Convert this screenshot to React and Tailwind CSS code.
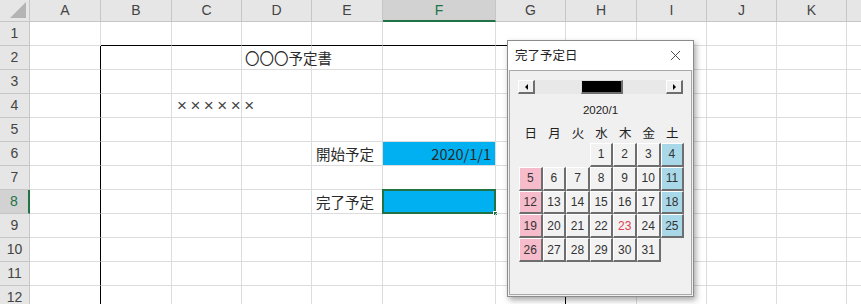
import React from 'react';
import { X } from 'lucide-react';

const COLS = ['A', 'B', 'C', 'D', 'E', 'F', 'G', 'H', 'I', 'J', 'K', ''];
const ROWS = [1, 2, 3, 4, 5, 6, 7, 8, 9, 10, 11, 12];

const jp = { fontFamily: '"Noto Sans CJK JP", "Noto Sans", sans-serif' };

// days of January 2020, starting on Wednesday
const DAYS = [null, null, null, ...Array.from({ length: 31 }, (_, i) => i + 1)];
const WEEK = ['日', '月', '火', '水', '木', '金', '土'];

function cellContent(r, c) {
  if (r === 2 && c === 3) return <span className="pl-[3px]">〇〇〇予定書</span>;
  if (r === 4 && c === 2)
    return (
      <span className="pl-[5px] text-[17px] tracking-[3.5px] text-[#444]" style={{ fontFamily: '"Liberation Sans", sans-serif' }}>
        ××××××
      </span>
    );
  if (r === 6 && c === 4) return <span className="pl-[4px]">開始予定</span>;
  if (r === 8 && c === 4) return <span className="pl-[4px]">完了予定</span>;
  return null;
}

function Cell({ r, c }) {
  const inBox = r >= 2;
  // outer box B2:G..
  const rightBlack = inBox && (c === 0 || c === 6);
  const bottomBlack = r === 1 && c >= 1 && c <= 6;
  const cls = [
    'relative flex items-center whitespace-nowrap overflow-visible text-[14.5px] text-[#2a2a2a]',
    'border-r border-b',
    rightBlack ? 'border-r-black' : 'border-r-[#dcdcdc]',
    bottomBlack ? 'border-b-black' : 'border-b-[#dcdcdc]',
  ];
  if (r === 6 && c === 5) {
    return (
      <div className={cls.join(' ') + ' bg-[#00b0f0] justify-end pr-[4px]'} style={jp}>
        2020/1/1
      </div>
    );
  }
  if (r === 8 && c === 5) {
    return (
      <div className={cls.join(' ') + ' bg-[#00b0f0]'}>
        <div className="absolute -left-px -top-px right-[-1px] bottom-[-1px] border-2 border-[#217346]" />
        <div className="absolute right-[-3px] bottom-[-3px] w-[5px] h-[5px] bg-[#217346] border border-white" />
      </div>
    );
  }
  return (
    <div className={cls.join(' ')} style={jp}>
      {cellContent(r, c)}
    </div>
  );
}

function DayButton({ d, col }) {
  if (!d) return <div />;
  const bg = col === 0 ? 'bg-[#f7bccb]' : col === 6 ? 'bg-[#a9d9e8]' : 'bg-[#f2f2f2]';
  const text = d === 23 ? 'text-[#e0404f]' : 'text-[#333]';
  return (
    <div
      className={`flex items-center justify-center text-[12px] border-t border-l border-t-white border-l-white border-r-2 border-b-2 border-r-[#6e6e6e] border-b-[#6e6e6e] ${bg} ${text}`}
      style={{ fontFamily: '"Liberation Sans", sans-serif' }}
    >
      {d}
    </div>
  );
}

function CalendarDialog() {
  return (
    <div className="absolute left-[507px] top-[40px] w-[187px] h-[257px] bg-[#f0f0f0] border border-[#8c8c8c] shadow-[2px_3px_6px_rgba(0,0,0,0.35)] flex flex-col">
      <div className="h-[29px] bg-white flex items-center justify-between pl-[7px] pr-[9px]">
        <span className="text-[12.5px] text-[#222]" style={jp}>完了予定日</span>
        <X size={17} strokeWidth={1.2} className="text-[#333]" />
      </div>
      <div className="flex-1 mx-[1px] mb-[1px] border border-[#a8a8a8] flex flex-col">
        {/* scroll bar */}
        <div className="mt-[9px] mx-[8px] h-[14px] flex bg-[#e8e8e8]">
          <div className="w-[17px] h-full bg-[#f0f0f0] border-r-2 border-b-2 border-r-[#6e6e6e] border-b-[#6e6e6e] border-t border-l border-t-white border-l-white flex items-center justify-center">
            <div className="w-0 h-0 border-y-[3px] border-y-transparent border-r-[3px] border-r-black" />
          </div>
          <div className="flex-1 flex pl-[46px]">
            <div className="w-[42px] h-full bg-black border-r-2 border-b-2 border-r-[#6e6e6e] border-b-[#6e6e6e] border-t border-l border-t-[#dcdcdc] border-l-[#dcdcdc]" />
          </div>
          <div className="w-[17px] h-full bg-[#f0f0f0] border-r-2 border-b-2 border-r-[#6e6e6e] border-b-[#6e6e6e] border-t border-l border-t-white border-l-white flex items-center justify-center">
            <div className="w-0 h-0 border-y-[3px] border-y-transparent border-l-[3px] border-l-black" />
          </div>
        </div>
        <div
          className="mt-[9px] text-center text-[11.5px] text-[#222] leading-[14px]"
          style={{ fontFamily: '"Liberation Sans", sans-serif' }}
        >
          2020/1
        </div>
        <div className="mt-[8px] ml-[9px] grid grid-cols-[repeat(7,23.6px)] text-[12.5px] text-[#222] leading-[16px]" style={jp}>
          {WEEK.map((w) => (
            <div key={w} className="text-center">{w}</div>
          ))}
        </div>
        <div className="mt-[2px] ml-[9px] grid grid-cols-[repeat(7,23.6px)] auto-rows-[23.8px]">
          {DAYS.map((d, i) => (
            <DayButton key={i} d={d} col={i % 7} />
          ))}
        </div>
      </div>
    </div>
  );
}

export default function App() {
  return (
    <div className="relative w-[861px] h-[304px] overflow-hidden bg-white">
      <div className="grid grid-cols-[30px_71px_71px_70px_70px_71px_113px_70px_71px_70px_70px_70px_70px] grid-rows-[22px_repeat(12,24px)]">
        {/* corner */}
        <div className="relative bg-[#e6e6e6] border-r border-b border-[#c6c6c6]">
          <div className="absolute right-[3px] bottom-[3px] w-0 h-0 border-l-[16px] border-l-transparent border-b-[16px] border-b-[#b4b4b4]" />
        </div>
        {COLS.map((c, i) => (
          <div
            key={i}
            className={`flex items-center justify-center text-[14px] border-r border-[#c6c6c6] ${
              i === 5
                ? 'bg-[#d2d2d2] text-[#217346] border-b-2 border-b-[#217346]'
                : 'bg-[#e6e6e6] text-[#444] border-b border-b-[#c6c6c6]'
            }`}
            style={{ fontFamily: '"Liberation Sans", sans-serif' }}
          >
            {c}
          </div>
        ))}
        {ROWS.map((r) => (
          <React.Fragment key={r}>
            <div
              className={`flex items-center justify-center text-[14px] border-b border-[#c6c6c6] ${
                r === 8
                  ? 'bg-[#d2d2d2] text-[#217346] border-r-2 border-r-[#217346]'
                  : 'bg-[#e6e6e6] text-[#444] border-r border-r-[#c6c6c6]'
              }`}
              style={{ fontFamily: '"Liberation Sans", sans-serif' }}
            >
              {r}
            </div>
            {COLS.map((c, ci) => (
              <Cell key={ci} r={r} c={ci} />
            ))}
          </React.Fragment>
        ))}
      </div>
      <CalendarDialog />
    </div>
  );
}
